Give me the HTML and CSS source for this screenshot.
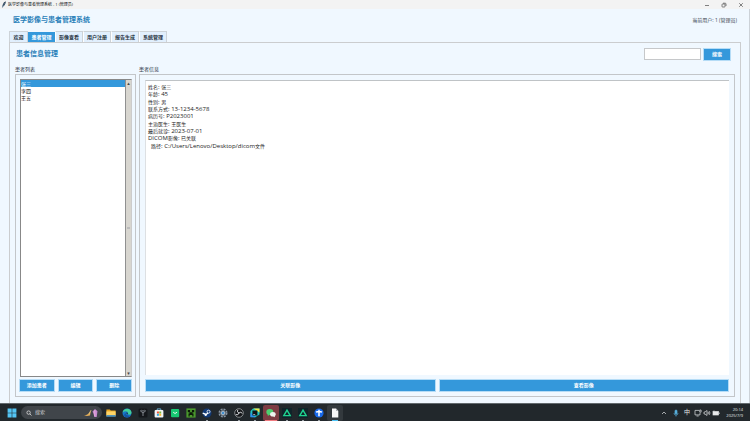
FILE: index.html
```html
<!DOCTYPE html>
<html lang="zh-CN">
<head>
<meta charset="utf-8">
<title>医学影像与患者管理系统</title>
<link rel="stylesheet" href="styles.css">
</head>
<body>
<header class="titlebar">
  <svg class="feather" viewBox="0 0 6 8"><path d="M1 8 1.4 4.5Q2.5 1 5 .2 5.4 2.6 3.6 4.8L2 6.2Z" fill="#27384a"/><path d="M1 7.6 4 2" stroke="#7aa7cf" stroke-width=".5"/></svg>
  <span class="caption">医学影像与患者管理系统 - 1 (管理员)</span>
  <button class="wbtn" aria-label="最小化"><svg viewBox="0 0 6 6"><path d="M1 3.5h4"/></svg></button>
  <button class="wbtn" aria-label="还原"><svg viewBox="0 0 6 6"><rect x="1" y="2" width="3" height="3" rx=".6"/><path d="M2 1.2h2.2q.8 0 .8.8v2"/></svg></button>
  <button class="wbtn" aria-label="关闭"><svg viewBox="0 0 6 6"><path d="M1.2 1.2l3.6 3.6M4.8 1.2 1.2 4.8"/></svg></button>
</header>
<main class="app">
  <div class="head"><h1>医学影像与患者管理系统</h1><span>当前用户: 1 (管理员)</span></div>
  <nav class="tabs" role="tablist">
    <button role="tab">欢迎</button>
    <button role="tab" class="active" aria-selected="true">患者管理</button>
    <button role="tab">影像查看</button>
    <button role="tab">用户注册</button>
    <button role="tab">报告生成</button>
    <button role="tab">系统管理</button>
  </nav>
  <section class="page">
    <div class="toolbar">
      <h2>患者信息管理</h2>
      <input type="text" aria-label="搜索患者">
      <button class="btn search">搜索</button>
    </div>
    <div class="columns">
      <section class="group list">
        <label for="patients">患者列表</label>
        <div class="frame">
          <div class="listbox">
            <select id="patients" size="3">
              <option selected>张三</option>
              <option>李四</option>
              <option>王五</option>
            </select>
            <div class="scroll"><i>▴</i><b></b><i>▾</i></div>
          </div>
          <div class="actions"><button class="btn">添加患者</button><button class="btn">编辑</button><button class="btn">删除</button></div>
        </div>
      </section>
      <section class="group info">
        <h3>患者信息</h3>
        <div class="frame">
          <div class="details">
            <div class="record">
              <p><span>姓名</span>: <span>张三</span></p>
              <p><span>年龄</span>: 45</p>
              <p><span>性别</span>: <span>男</span></p>
              <p><span>联系方式</span>: 13-1234-5678</p>
              <p><span>病历号</span>: P2023001</p>
              <p><span>主治医生</span>: <span>王医生</span></p>
              <p><span>最后就诊</span>: 2023-07-01</p>
              <p>DICOM<span>影像</span>: <span>已关联</span></p>
              <p class="path"><span>路径</span>: C:/Users/Lenovo/Desktop/dicom<span>文件</span></p>
            </div>
          </div>
          <div class="actions"><button class="btn">关联影像</button><button class="btn">查看影像</button></div>
        </div>
      </section>
    </div>
  </section>
</main>
<footer class="taskbar">
  <button class="task" aria-label="开始"><svg viewBox="0 0 10 10"><path d="M.6.6h4.1v4.1H.6zM5.3.6h4.1v4.1H5.3zM.6 5.3h4.1v4.1H.6zM5.3 5.3h4.1v4.1H5.3z" fill="#54c5f4"/></svg></button>
  <label class="find">
    <svg viewBox="0 0 6 6"><circle cx="2.6" cy="2.6" r="1.7"/><path d="M3.9 3.9 5.5 5.5"/></svg>
    <input type="text" placeholder="搜索" aria-label="搜索">
    <svg class="art" viewBox="0 0 16 10"><path d="M.8 7.2Q4 8 7.8 3L7 7.4 4 8Z" fill="#e2ad59"/><path d="M6 5.8 8 2.2" stroke="#f1ce86"/><path d="M9.5 3.5 12 1l2.5 2.2-.8 5.8h-2.4L10.6 6Z" fill="#c58bd0"/><path d="M11.8 2.2v6" stroke="#f3b7d9"/></svg>
  </label>
  <button class="task" aria-label="文件资源管理器"><svg viewBox="0 0 10 10"><path d="M.4 1.4h3.4l1 1.2h4.8v6H.4z" fill="#e9a520"/><path d="M.4 3.4h9.2v4.2H.4z" fill="#ffd567"/><path d="M.4 7.2h9.2v1.5H.4z" fill="#2c86d1"/></svg></button>
  <button class="task" aria-label="Edge"><svg viewBox="0 0 10 10"><circle cx="5" cy="5" r="4.5" fill="#1877c9"/><path d="M.6 4.4C1.4-.6 9-.6 9.5 4.4 9.5 6.7 6.6 7 6 6 6.8 3.4 3.2 2.4.6 4.4Z" fill="#42cf98"/><path d="M3.7 5.1Q3.5 8 8.6 7.7 6 10.4 3.2 9 .8 6.6 3.7 5.1Z" fill="#1555a2"/><path d="M4.4 4.6Q6.2 4.2 5.7 6.6 4.2 6.2 4.4 4.6Z" fill="#22282c"/></svg></button>
  <button class="task" aria-label="游戏"><svg viewBox="0 0 10 10"><rect x=".5" y=".5" width="9" height="9" rx="1.5" fill="#14171b"/><path d="M2 2.5 5 5l3-2.5M5 5v3M3.3 2.2 5 3.2l1.7-1" fill="none" stroke="#9ba1a8" stroke-width=".8"/></svg></button>
  <button class="task" aria-label="应用商店"><svg viewBox="0 0 10 10"><path d="M3.2 2.2V.9h3.6v1.3" fill="none" stroke="#7bcaf2" stroke-width=".8"/><rect x=".6" y="1.9" width="8.8" height="7.5" rx="1" fill="#f2f4f6"/><path d="M2.9 3.5h2v2h-2z" fill="#ef5135"/><path d="M5.2 3.5h2v2h-2z" fill="#7db83b"/><path d="M2.9 5.8h2v2h-2z" fill="#2ba4e2"/><path d="M5.2 5.8h2v2h-2z" fill="#f8b72c"/></svg></button>
  <button class="task" aria-label="商城"><svg viewBox="0 0 10 10"><rect x="1" y="1" width="8.2" height="8.2" rx="1" fill="#18c973"/><path d="M3.2 4.2q1.8 2.6 3.8 0" fill="none" stroke="#fff" stroke-width=".9"/></svg></button>
  <button class="task" aria-label="我的世界"><svg viewBox="0 0 10 10"><path d="M.4.4h9.2v9.2H.4z" fill="#4b9a2d"/><path d="M1.8 2h2.3v2.2h1.8V2h2.3v2.2H6.5v1.2h1v3H6.3V7H3.7v1.4H2.5v-3h1V4.2H1.8z" fill="#0b1a08"/></svg></button>
  <button class="task run" aria-label="Steam"><svg viewBox="0 0 10 10"><circle cx="5" cy="5" r="4.5" fill="#123a76"/><circle cx="6.5" cy="3.7" r="1.5" fill="none" stroke="#fff" stroke-width=".8"/><path d="M.7 5.2 4 6.5 6 5" stroke="#fff" stroke-width="1.4" fill="none"/><circle cx="3.7" cy="6.9" r="1.1" fill="#fff"/></svg></button>
  <button class="task" aria-label="设置"><svg viewBox="0 0 10 10"><circle cx="5" cy="5" r="3.8" fill="none" stroke="#8794a2" stroke-width="1.4" stroke-dasharray="2 1"/><circle cx="5" cy="5" r="2.5" fill="#b4c2cf" stroke="#66737f"/><circle cx="5" cy="5" r="1.2" fill="#3f8fd1"/></svg></button>
  <button class="task run" aria-label="OBS"><svg viewBox="0 0 10 10"><circle cx="5" cy="5" r="4.3" fill="#141619" stroke="#c9cccf" stroke-width=".6"/><path d="M5 5Q2.4 4.3 3.8 1.8M5 5q1.9-1.9 3.4.5M5 5q-.6 2.6-3.3 1.6" fill="none" stroke="#d1d3d6" stroke-width="1"/></svg></button>
  <button class="task run" aria-label="PyCharm"><svg viewBox="0 0 10 10"><path d="M3 .5h6.5v6L5.2 9.2.5 9V3z" fill="#22c6c0"/><path d="M3.5.5h6v4z" fill="#efe94a"/><path d="M.5 4.5V9.3h5z" fill="#2a8ff0"/><path d="M2.4 2.5h5v5h-5z" fill="#101418"/><path d="M3.2 6.5h2" stroke="#fff" stroke-width=".6"/></svg></button>
  <button class="task run wechat" aria-label="微信"><svg viewBox="0 0 10 10"><ellipse cx="3.8" cy="3.9" rx="3.5" ry="3" fill="#4dd070"/><path d="M1.8 6v2L4 6.6z" fill="#4dd070"/><ellipse cx="6.9" cy="6.2" rx="2.8" ry="2.3" fill="#eef2ee"/><path d="M7 8h1.8v1.2z" fill="#eef2ee"/></svg></button>
  <button class="task run" aria-label="项目一"><svg viewBox="0 0 10 10"><path d="M0 0h10v10H0z" fill="#10242a"/><path d="M5 2.2 8.2 7.6H1.8z" fill="none" stroke="#1fd38f" stroke-width="1.4"/></svg></button>
  <button class="task run" aria-label="项目二"><svg viewBox="0 0 10 10"><path d="M0 0h10v10H0z" fill="#10242a"/><path d="M5 2.2 8.2 7.6H1.8z" fill="none" stroke="#1fd38f" stroke-width="1.4"/></svg></button>
  <button class="task run" aria-label="助手"><svg viewBox="0 0 10 10"><circle cx="5" cy="5" r="4.6" fill="#1768e8"/><path d="M2 4.2Q5 2.6 8 4.2M5 1.8v6.5" fill="none" stroke="#fff" stroke-width="1.5"/></svg></button>
  <button class="task run current" aria-label="文档"><svg viewBox="0 0 10 10"><path d="M2 .6h4l2.3 2.3v6.6H2z" fill="#f7f7f7"/><path d="M6 .6v2.3h2.3z" fill="#aeb3b8"/></svg></button>
  <div class="tray">
    <svg viewBox="0 0 8 8"><path d="M2 5l2-2 2 2"/></svg>
    <svg class="mic" viewBox="0 0 8 8"><rect x="3" y="1" width="2" height="4" rx="1" fill="#58afdc"/><path d="M2 4q0 2 2 2t2-2M4 6v1.5"/></svg>
    <span>中</span>
    <svg class="near" viewBox="0 0 8 8"><path d="M5 1.4H1v4.5h5V4M2.5 7h2.2M5.7 1h1.4v2.2H5.7z"/></svg>
    <svg class="near" viewBox="0 0 8 8"><path d="M1 3h1l2-1.5v5L2 5H1zM5 3q1 1 0 2M6 2q2 2 0 4"/></svg>
    <svg class="near" viewBox="0 0 8 8"><rect x="1" y="2.5" width="5.5" height="3.5" fill="#e8eaec"/><path d="M7.3 3.5v1.5M2 1.5v1"/></svg>
    <time>20:14<br>2025/7/9</time>
  </div>
</footer>
</body>
</html>
```
FILE: styles.css
```css
* { box-sizing: border-box; }
body {
  margin: 0;
  height: 100vh;
  display: flex;
  flex-direction: column;
  overflow: hidden;
  background: #f0f8ff;
  color: #222;
  font-family: "Open Sans", "Noto Sans CJK SC", sans-serif;
  font-size: 5px;
  line-height: 7px;
}
button, input, select { font: inherit; color: inherit; margin: 0; padding: 0; border: 0; border-radius: 0; min-width: 0; }
button { background: none; }
h1, h2, h3, p { margin: 0; }
svg { display: block; flex: none; }

.titlebar { flex: none; height: 9px; display: flex; align-items: center; background: #f3f3f3; padding: 0 1px; }
.feather { width: 6px; height: 7px; margin-right: 1px; }
.caption { flex: 1; font-size: 4px; color: #111; }
.wbtn { width: 17px; height: 9px; display: grid; place-items: center; }
.wbtn svg { width: 6px; height: 6px; fill: none; stroke: #333; stroke-width: .6; }

.app { flex: 1; min-height: 0; display: flex; flex-direction: column; padding: 0 8px 0 9px; border-right: 1px solid #ccd2d8; overflow: hidden; }
.head { flex: none; height: 22px; display: flex; align-items: center; justify-content: space-between; padding: 0 4px; color: #3a4753; }
h1, h2 { font-size: 7px; line-height: 10px; font-weight: 700; color: #2980b9; }

.tabs { flex: none; display: flex; height: 11px; align-items: stretch; }
.tabs button { width: 28px; border: 1px solid #cdd3d8; border-left-color: #fff; border-bottom: 0; background: #e1effd; font-weight: 700; white-space: nowrap; color: #26323e; }
.tabs button:first-child { width: 19px; border-left-color: #cdd3d8; }
.tabs .active { width: 27px; margin-top: 1px; border-color: #3498db; background: #3498db; color: #fff; }

.page { flex: 1; min-height: 0; display: flex; flex-direction: column; border: 1px solid #cbcdcf; border-bottom: 0; padding: 4px 5px 6px; }
.toolbar { flex: none; height: 14px; display: flex; align-items: center; gap: 2px; padding: 0 4px 0 1px; }
.toolbar h2 { flex: 1; }
.toolbar input { width: 57px; height: 12px; border: 1px solid #c6c8ca; background: #fff; }
.btn { height: 13px; background: #3498db; border: 1px solid #b5dcf6; color: #fff; font-weight: 700; white-space: nowrap; }
.search { width: 28px; }

.columns { flex: 1; min-height: 0; display: flex; gap: 3px; padding-top: 5px; }
.group { display: flex; flex-direction: column; min-height: 0; }
.group label, .group h3 { flex: none; display: block; height: 8px; font-size: 5px; font-weight: 400; color: #26323e; }
.list { flex: 0 0 121px; }
.info { flex: 1; min-width: 0; }
.frame { flex: 1; min-height: 0; display: flex; flex-direction: column; border: 1px solid #c3c6c9; padding: 4px 3px; gap: 2px; }
.info .frame { padding: 5px 5px 4px; gap: 4px; }

.listbox { flex: 1; min-height: 0; display: flex; margin-left: 1px; border: 1px solid #888; border-right-color: #ccc; }
select { flex: 1; height: 100%; background: #fff; overflow: hidden; appearance: none; outline: 0; }
option { padding: 0; height: 7px; min-height: 0; line-height: 7px; font-size: 5px; color: #222; }
option:checked { background: #3498db linear-gradient(#3498db, #3498db); color: #fff; }
.scroll { width: 6px; display: flex; flex-direction: column; background: #d8d6d0; border-left: 1px solid #909090; color: #444; }
.scroll i { height: 6px; font: 5px/6px "DejaVu Sans", sans-serif; text-align: center; }
.scroll b { flex: 1; background: linear-gradient(#bbb, #bbb) center / 3px 2px no-repeat; }
.actions { flex: none; display: flex; gap: 3px; }
.actions .btn { flex: 1; }

.details { flex: 1; min-height: 0; background: #fff; border-top: 1px solid #bfc3c6; border-left: 1px solid #dde0e3; padding: 3px 2px; font-size: 6px; line-height: 7px; color: #222; }
.record { display: grid; grid-auto-rows: 1fr; height: 66px; }
.record span { font-size: 5px; }
.record .path { padding-left: 3px; }

.taskbar { flex: none; height: 18px; display: flex; align-items: center; background: #22282c; border-top: 1px solid #62696d; color: #e6e8ea; padding: 0 7px 0 4px; }
.task { position: relative; width: 16px; height: 16px; display: grid; place-items: center; flex: none; }
.task svg { width: 10px; height: 10px; }
.find { flex: none; display: flex; align-items: center; width: 81px; height: 13px; margin: 0 1px; padding: 0 3px 0 5px; border-radius: 7px; background: #40454a; }
.find svg { width: 6px; height: 6px; fill: none; stroke: #ddd; stroke-width: .8; }
.find input { flex: 1; background: none; padding-left: 3px; }
.find input::placeholder { color: #cdd0d3; opacity: 1; }
.find .art { width: 16px; height: 10px; stroke: none; }
.run::after { content: ""; position: absolute; bottom: 0; left: 7px; width: 2px; height: 1px; background: #9aa0a5; }
.wechat { background: #7d3c43; border-radius: 2px; }
.wechat::after { left: 2px; width: 12px; background: #f07b80; }
.current { background: #33393d; border-radius: 2px; }
.current::after { left: 5px; width: 6px; background: #4cc2f5; }
.tray { margin-left: auto; display: flex; align-items: center; gap: 4px; }
.tray svg { width: 8px; height: 8px; fill: none; stroke: #e1e4e6; stroke-width: .7; }
.tray .near + .near { margin-left: -3px; }
.tray .mic { stroke: #58afdc; }
.tray span { font-size: 6px; }
.tray time { font-size: 4px; line-height: 6px; text-align: right; width: 19px; }
```
